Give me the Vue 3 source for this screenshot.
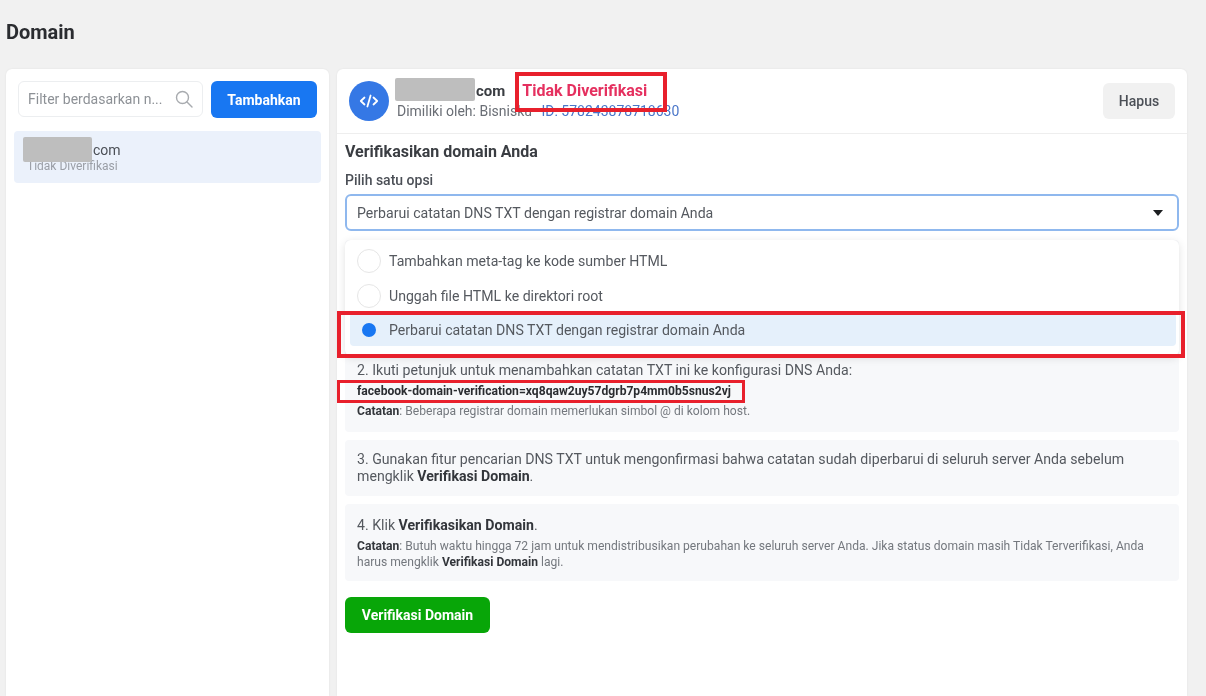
<script setup>
const options = [
  { label: 'Tambahkan meta-tag ke kode sumber HTML', selected: false },
  { label: 'Unggah file HTML ke direktori root', selected: false },
  { label: 'Perbarui catatan DNS TXT dengan registrar domain Anda', selected: true },
]
</script>

<template>
  <div class="page">
    <h1 class="title">Domain</h1>
    <div class="columns">
      <aside class="card side">
        <div class="toolbar">
          <div class="search">
            <span class="search-text">Filter berdasarkan n...</span>
            <svg width="18" height="18" viewBox="0 0 18 18" fill="none" stroke="#a8abaf" stroke-width="1.4">
              <circle cx="7.5" cy="7.5" r="6" />
              <path d="M12 12l5 5" stroke-linecap="round" />
            </svg>
          </div>
          <button class="btn-add">Tambahkan</button>
        </div>
        <div class="item">
          <span class="redact redact-side"></span>
          <div class="item-name">com</div>
          <div class="item-status">Tidak Diverifikasi</div>
        </div>
      </aside>

      <main class="card detail">
        <header class="head">
          <div class="avatar">
            <svg width="20" height="16" viewBox="0 0 20 16" fill="none" stroke="#fff" stroke-width="1.8" stroke-linecap="round" stroke-linejoin="round">
              <path d="M5.5 4.5L1.8 8l3.7 3.5M14.5 4.5L18.2 8l-3.7 3.5M11.6 2.5L8.4 13.5" />
            </svg>
          </div>
          <div class="head-text">
            <div class="head-name">
              <span class="redact redact-head"></span>
              <span class="dom">com</span>
              <span class="status">Tidak Diverifikasi</span>
            </div>
            <div class="owner">Dimiliki oleh: Bisnisku <span class="id">ID: 578243878718630</span></div>
          </div>
          <button class="btn-del">Hapus</button>
          <span class="mark mark-status"></span>
        </header>

        <section class="body">
          <h2 class="subtitle">Verifikasikan domain Anda</h2>
          <div class="label">Pilih satu opsi</div>
          <div class="select">
            <span>Perbarui catatan DNS TXT dengan registrar domain Anda</span>
            <svg width="10" height="6" viewBox="0 0 10 6"><path d="M0 0h10L5 6z" fill="#1c1e21" /></svg>
          </div>

          <div class="steps">
            <div class="menu">
              <div v-for="o in options" :key="o.label" class="opt" :class="{ on: o.selected }">
                <span class="radio" :class="{ on: o.selected }"></span>
                <span>{{ o.label }}</span>
              </div>
            </div>
            <span class="mark mark-opt"></span>

            <div class="step step-2">
              <p class="line">2. Ikuti petunjuk untuk menambahkan catatan TXT ini ke konfigurasi DNS Anda:</p>
              <p class="code">facebook-domain-verification=xq8qaw2uy57dgrb7p4mm0b5snus2vj<span class="mark mark-code"></span></p>
              <p class="note"><b>Catatan</b>: Beberapa registrar domain memerlukan simbol @ di kolom host.</p>
            </div>
            <div class="step step-3">
              <p class="line">3. Gunakan fitur pencarian DNS TXT untuk mengonfirmasi bahwa catatan sudah diperbarui di seluruh server Anda sebelum mengklik <b>Verifikasi Domain</b>.</p>
            </div>
            <div class="step step-4">
              <p class="line">4. Klik <b>Verifikasikan Domain</b>.</p>
              <p class="note note-4"><b>Catatan</b>: Butuh waktu hingga 72 jam untuk mendistribusikan perubahan ke seluruh server Anda. Jika status domain masih Tidak Terverifikasi, Anda harus mengklik <b>Verifikasi Domain</b> lagi.</p>
            </div>
          </div>

          <button class="btn-verify">Verifikasi Domain</button>
        </section>
      </main>
    </div>
  </div>
</template>

<style>
html, body { margin: 0; background: #f1f1f1; }
</style>

<style scoped>
.page {
  width: 1206px;
  height: 696px;
  overflow: hidden;
  box-sizing: border-box;
  padding: 0 19px 0 6px;
  background: #f1f1f1;
  font-family: Roboto, "Liberation Sans", sans-serif;
  color: #4b4f56;
  filter: blur(0.4px);
}
.title {
  margin: 0;
  padding-top: 20px;
  height: 69px;
  box-sizing: border-box;
  font-size: 20px;
  line-height: 24px;
  font-weight: 700;
  color: #2a2c30;
}
.columns {
  display: grid;
  grid-template-columns: 323px 850px;
  gap: 8px;
  height: 627px;
}
.card {
  background: #fff;
  border-radius: 6px 6px 0 0;
  box-shadow: 0 0 2px rgba(0, 0, 0, 0.08);
}
.side { padding: 12px 8px 0; }
.toolbar {
  display: flex;
  gap: 8px;
  padding: 0 4px;
}
.search {
  width: 185px;
  height: 36px;
  box-sizing: border-box;
  display: flex;
  align-items: center;
  justify-content: space-between;
  padding: 0 9px 0 9px;
  border: 1px solid #eceef0;
  border-radius: 6px;
}
.search-text { font-size: 14px; color: #8d9196; }
.btn-add {
  width: 106px;
  height: 37px;
  border: 0;
  border-radius: 6px;
  background: #1877f2;
  color: #fff;
  font: 700 14px Roboto, "Liberation Sans", sans-serif;
}
.item {
  position: relative;
  margin-top: 13px;
  height: 52px;
  box-sizing: border-box;
  padding: 10px 0 0 13px;
  background: #ebf1fb;
  border-radius: 4px;
}
.item-name {
  padding-left: 66px;
  font-size: 14px;
  line-height: 18px;
  color: #4b4f56;
}
.item-status { font-size: 12px; line-height: 15px; color: #9a9ea6; }
.redact { position: absolute; background: #bebebe; border-radius: 2px; }
.redact-side { left: 9px; top: 6px; width: 69px; height: 25px; }

.detail { display: flex; flex-direction: column; min-width: 0; }
.head {
  position: relative;
  height: 65px;
  box-sizing: border-box;
  display: flex;
  align-items: center;
  padding: 0 12px;
  border-bottom: 1px solid #eeeeee;
}
.avatar {
  width: 40px;
  height: 40px;
  flex: none;
  border-radius: 50%;
  background: #3578e5;
  display: flex;
  align-items: center;
  justify-content: center;
}
.head-text { flex: 1; padding-left: 8px; }
.head-name {
  position: relative;
  padding-left: 81px;
  height: 20px;
  line-height: 20px;
  margin-left: -2px;
}
.redact-head { left: 0; top: -3px; width: 80px; height: 23px; }
.dom { font-size: 15px; font-weight: 700; color: #3a3d42; }
.status {
  margin-left: 17px;
  font-size: 16px;
  font-weight: 700;
  color: #e5305f;
}
.owner {
  font-size: 14px;
  line-height: 20px;
  color: #6a6e75;
}
.id { margin-left: 6px; color: #4a76c9; }
.btn-del {
  width: 72px;
  height: 36px;
  border: 0;
  border-radius: 6px;
  background: #f1f1f1;
  color: #4b4f56;
  font: 500 14px Roboto, "Liberation Sans", sans-serif;
}
.mark {
  position: absolute;
  box-sizing: border-box;
  border: 4px solid #e8202c;
  pointer-events: none;
}
.mark-status { left: 178px; top: 3px; width: 152px; height: 40px; }

.body { padding: 0 8px; }
.subtitle {
  margin: 0;
  padding-top: 8px;
  height: 33px;
  box-sizing: border-box;
  font-size: 16px;
  line-height: 20px;
  font-weight: 700;
  color: #3a3d42;
}
.label {
  height: 27px;
  padding-top: 4px;
  box-sizing: border-box;
  font-size: 14px;
  line-height: 18px;
  font-weight: 500;
  color: #4b4f56;
}
.select {
  height: 37px;
  box-sizing: border-box;
  display: flex;
  align-items: center;
  justify-content: space-between;
  padding: 0 14px 0 10px;
  border: 2px solid #8fb8ee;
  border-radius: 6px;
  font-size: 14.12px;
  color: #55595f;
}
.steps {
  position: relative;
  display: flex;
  flex-direction: column;
  gap: 8px;
  margin-top: 9px;
}
.menu {
  position: absolute;
  left: 0;
  right: 0;
  top: 0;
  height: 116px;
  box-sizing: border-box;
  padding: 3px 3px 0 5px;
  background: #fff;
  border-radius: 6px;
  box-shadow: 0 2px 8px rgba(0, 0, 0, 0.12);
  z-index: 1;
}
.opt {
  display: flex;
  align-items: center;
  gap: 8px;
  height: 35px;
  padding-left: 7px;
  font-size: 14.12px;
  color: #55595f;
}
.opt.on {
  height: 33px;
  border-radius: 4px;
  background: #e5f0fb;
}
.radio {
  width: 24px;
  height: 24px;
  box-sizing: border-box;
  flex: none;
  border: 1px solid #e6e6e6;
  border-radius: 50%;
}
.radio.on {
  border: 5px solid #e5f0fb;
  background: #1877f2;
}
.mark-opt {
  left: -8px;
  top: 71px;
  width: 848px;
  height: 47px;
  z-index: 2;
}
.step {
  background: #f7f8fa;
  border-radius: 4px;
  padding: 0 12px;
  box-sizing: border-box;
}
.step-2 { height: 192px; padding-top: 122px; }
.step-3 { height: 56px; padding-top: 11px; }
.step-4 { height: 77px; padding-top: 13px; }
p { margin: 0; }
.line { font-size: 14.13px; line-height: 17px; color: #55595f; }
.line b, .note b { font-weight: 700; color: #33363b; }
.code {
  position: relative;
  margin-top: 5px;
  font-size: 12.1px;
  line-height: 14px;
  font-weight: 700;
  color: #2a2c30;
}
.mark-code {
  left: -20px;
  top: -4px;
  width: 408px;
  height: 23px;
  border-width: 3px;
}
.note {
  margin-top: 5px;
  font-size: 12.1px;
  line-height: 16px;
  color: #74787e;
}
.note-4 { margin-top: 4px; }
.btn-verify {
  display: block;
  margin-top: 16px;
  width: 145px;
  height: 36px;
  border: 0;
  border-radius: 6px;
  background: #08a608;
  color: #fff;
  font: 700 14px Roboto, "Liberation Sans", sans-serif;
}
</style>
